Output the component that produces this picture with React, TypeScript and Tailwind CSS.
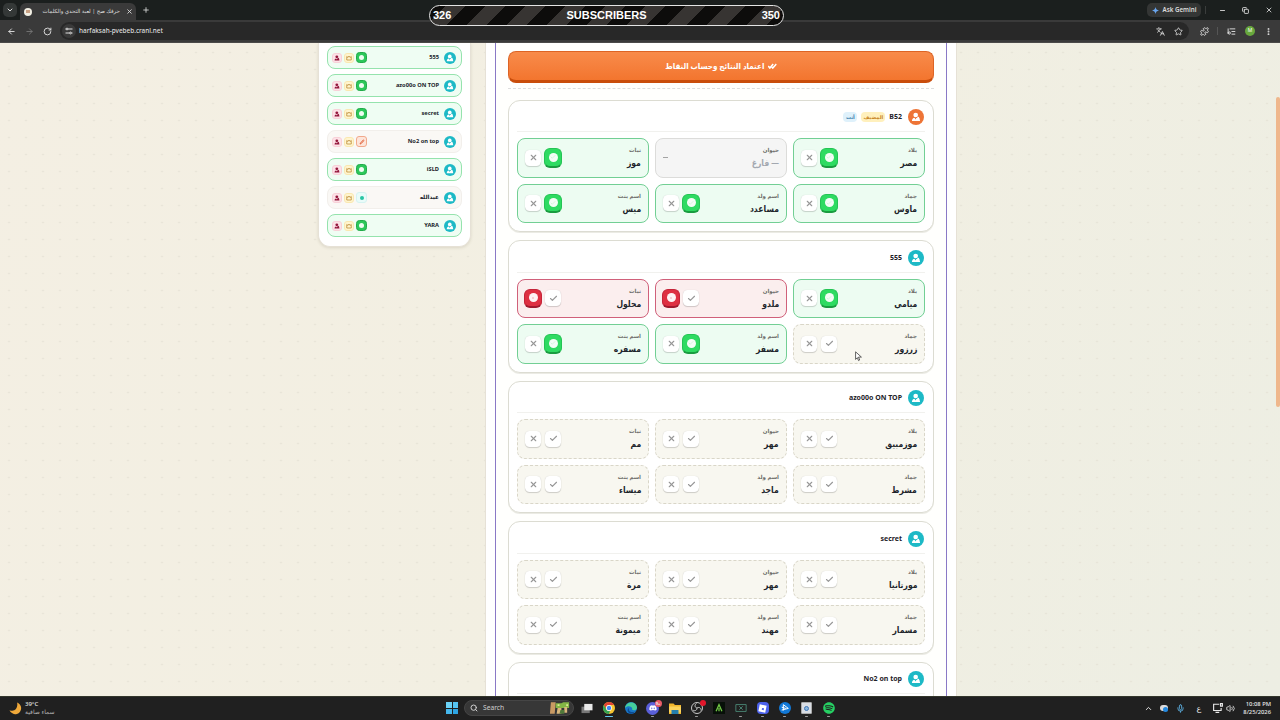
import type { ReactNode } from "react";
import {
  ArrowLeft,
  ArrowRight,
  Check,
  ChevronDown,
  ChevronUp,
  Copy,
  Languages,
  ListMusic,
  Mic,
  Minus,
  MoreVertical,
  Plus,
  Puzzle,
  RotateCw,
  Search,
  Star,
  Volume2,
  X,
} from "lucide-react";
import { FaDiscord, FaSpotify } from "react-icons/fa";

type Status = "idle" | "ok" | "bad" | "empty";

interface Answer {
  label: string;
  value: string;
  status: Status;
}

interface Player {
  name: string;
  host?: boolean;
  answers: Answer[];
}

const LABELS = ["بلاد", "حيوان", "نبات", "جماد", "اسم ولد", "اسم بنت"];

function answers(values: string[], statuses?: Status[]): Answer[] {
  return values.map((value, i) => ({
    label: LABELS[i],
    value,
    status: statuses ? statuses[i] : "idle",
  }));
}

const PLAYERS: Player[] = [
  {
    name: "B52",
    host: true,
    answers: answers(
      ["مصر", "— فارغ", "موز", "ماوس", "مساعدد", "ميس"],
      ["ok", "empty", "ok", "ok", "ok", "ok"]
    ),
  },
  {
    name: "555",
    answers: answers(
      ["ميامي", "ملدو", "محلول", "زرزور", "مسفر", "مسفره"],
      ["ok", "bad", "bad", "idle", "ok", "ok"]
    ),
  },
  { name: "azo00o ON TOP", answers: answers(["موزمبيق", "مهر", "مم", "مشرط", "ماجد", "ميساء"]) },
  { name: "secret", answers: answers(["مورتانيا", "مهر", "مرة", "مسمار", "مهند", "ميمونة"]) },
  { name: "No2 on top", answers: [] },
];

const SIDEBAR = [
  { name: "555", state: "done" },
  { name: "azo00o ON TOP", state: "done" },
  { name: "secret", state: "done" },
  { name: "No2 on top", state: "writing" },
  { name: "iSLD", state: "done" },
  { name: "عبدالله", state: "online" },
  { name: "YARA", state: "done" },
];

const CELL_STYLES: Record<Status, string> = {
  ok: "border-[#72cf94] bg-[#edfcf2]",
  bad: "border-[#d0607a] bg-[#fbeeee]",
  empty: "border-[#dcdcda] bg-[#f5f5f5]",
  idle: "border-dashed border-[#d9d6c8] bg-[#f8f7f0]",
};

function UserIcon({ className }: { className?: string }) {
  return (
    <svg viewBox="0 0 16 16" className={className} fill="currentColor">
      <circle cx="7.500" cy="4.800" r="3.700" />
      <path d="M1.500 14.500c0-3.200 1.800-4.800 4-5.300L7.500 12l1-2.500h5l1 5z" />
      <circle cx="11.500" cy="9" r="1.600" />
    </svg>
  );
}

function Avatar({ host }: { host?: boolean }) {
  return (
    <div
      className={`flex size-4 shrink-0 items-center justify-center rounded-full text-white ${
        host ? "bg-[#ee7436]" : "bg-[#1db9c6]"
      }`}
    >
      <UserIcon className="size-2.5" />
    </div>
  );
}

function MarkButton({ kind, active }: { kind: "ok" | "bad"; active: boolean }) {
  if (active) {
    const color =
      kind === "ok"
        ? "bg-[#2edb62] border-[#24c454] border-b-[#1a9c40] text-[#c9f3d5]"
        : "bg-[#de3042] border-[#c52439] border-b-[#a01a2e] text-[#f5c4c9]";
    return (
      <div className={`-mx-px flex h-[19.5px] w-[18px] items-center justify-center rounded-md border border-b-2 ${color}`}>
        <div className="flex size-[9px] items-center justify-center rounded-full bg-white/95">
          {kind === "ok" ? (
            <Check className="size-1.5" strokeWidth={3} />
          ) : (
            <div className="size-0.5 rounded-full bg-current" />
          )}
        </div>
      </div>
    );
  }
  return (
    <div className="flex size-4 items-center justify-center rounded-[4.5px] bg-white text-[#979797] shadow-[0_1px_1px_rgba(0,0,0,0.16),0_0_1px_rgba(0,0,0,0.16)]">
      {kind === "ok" ? (
        <Check className="size-[9px]" strokeWidth={3} />
      ) : (
        <X className="size-[9px]" strokeWidth={3} />
      )}
    </div>
  );
}

function AnswerCell({ label, value, status }: Answer) {
  return (
    <div className={`flex h-[39.5px] items-center justify-between rounded-lg border px-[7px] ${CELL_STYLES[status]}`}>
      <div className="flex flex-col pt-px">
        <span className="h-[10px] text-[5.5px] leading-[8px] font-semibold text-[#6d6d69]">{label}</span>
        <span
          className={`h-[14px] origin-right scale-x-[0.88] text-[8.7px] leading-[14px] font-bold whitespace-nowrap ${
            status === "empty" ? "text-[#a3a8b0]" : "text-[#20242b]"
          }`}
        >
          {value}
        </span>
      </div>
      {status === "empty" ? (
        <div className="h-px w-[5px] bg-[#a3a3a3]" />
      ) : (
        <div className="flex items-center gap-1">
          <MarkButton kind="ok" active={status === "ok"} />
          <MarkButton kind="bad" active={status === "bad"} />
        </div>
      )}
    </div>
  );
}

function PlayerCard({ name, host, answers }: Player) {
  return (
    <div className="h-[132.5px] shrink-0 rounded-xl border border-[#dcdcd2] bg-white px-2 shadow-[0_1px_0_#ebebe4]">
      <div className="mb-1.5 flex h-[31.5px] items-center gap-1.5 border-b border-[#f1f1ee] pt-[3px] pr-px">
        <Avatar host={host} />
        <span className="text-[7px] font-bold text-[#1e2228]">{name}</span>
        {host && (
          <>
            <span className="-mr-0.5 flex h-2.5 w-6 items-center justify-center rounded-sm bg-[#fff0bd] text-[5px] font-bold text-[#c98626]">
              المضيف
            </span>
            <span className="-mr-0.5 flex h-2.5 w-3.5 items-center justify-center rounded-sm bg-[#dff1fb] text-[5px] font-bold text-[#367cab]">
              أنت
            </span>
          </>
        )}
      </div>
      <div className="grid grid-cols-3 gap-1.5">
        {answers.map((answer) => (
          <AnswerCell key={answer.label} {...answer} />
        ))}
      </div>
    </div>
  );
}

function StateBadge({ state }: { state: string }) {
  if (state === "done") {
    return (
      <div className="flex size-[11px] items-center justify-center rounded-[3.5px] border border-[#22ab4a] bg-[#2cc75a]">
        <div className="size-[5px] rounded-full bg-[#effcf2]" />
      </div>
    );
  }
  if (state === "writing") {
    return (
      <div className="flex size-[11px] items-center justify-center rounded-[3px] border border-[#f1a98c] bg-[#fde5da] text-[#e26a45]">
        <svg viewBox="0 0 12 12" className="size-1.5" fill="none" stroke="currentColor" strokeWidth="2">
          <path d="M2 10l2-.5L10 3 8.700 1.800 3 8z" />
        </svg>
      </div>
    );
  }
  return (
    <div className="flex size-[11px] items-center justify-center rounded-[3px] border border-[#d5f3f1] bg-[#e9fbf9]">
      <div className="size-1 rounded-full bg-[#27c5a3]" />
    </div>
  );
}

function Sidebar() {
  return (
    <aside className="flex h-[203.5px] w-[153px] shrink-0 flex-col gap-[5px] rounded-b-xl border border-t-0 border-[#e6e1d6] bg-white px-2 pt-[3px] shadow-[0_1px_3px_rgba(90,80,50,0.15)]">
      {SIDEBAR.map(({ name, state }) => (
        <div
          key={name}
          className={`flex h-[23px] shrink-0 items-center rounded-lg border pr-[5px] pl-1 ${
            state === "done" ? "border-[#95e3ad] bg-[#effdf3]" : "border-[#f2efeb] bg-[#faf8f5]"
          }`}
        >
          <div className="flex size-3 items-center justify-center rounded-full bg-[#1db9c6] text-white">
            <UserIcon className="size-2" />
          </div>
          <span className="mr-[5px] text-[5.7px] font-bold text-[#20242b]">{name}</span>
          <div className="mr-auto flex items-center gap-0.5">
            <StateBadge state={state} />
            <div className="flex size-2.5 items-center justify-center rounded-[3px] border border-[#fae8b0] bg-[#fff5cf] text-[#b8862f]">
              <svg viewBox="0 0 12 12" className="size-1.5" fill="none" stroke="currentColor" strokeWidth="1.500">
                <path d="M1.500 3l2.500 2 2-3 2 3 2.500-2v7h-9z" />
              </svg>
            </div>
            <div className="flex size-2.5 items-center justify-center rounded-[3px] border border-[#f8d0d8] bg-[#fde2e7] text-[#94183d]">
              <UserIcon className="size-1.5" />
            </div>
          </div>
        </div>
      ))}
    </aside>
  );
}

function BrowserChrome() {
  return (
    <header className="flex h-[43px] shrink-0 flex-col border-b border-[#4b4a49] bg-[#3a3a3a] text-[#dedede]">
      <div className="flex h-5 items-center bg-[#1b1f1e]">
        <div className="ml-[3px] flex size-3.5 items-center justify-center rounded-[5px] bg-[#343837]">
          <ChevronDown className="size-2" strokeWidth={3} />
        </div>
        <div className="mt-[3px] ml-[3px] flex h-[17px] w-[116px] items-center rounded-t-md bg-[#3a3a3a] pl-1">
          <div className="flex size-2 shrink-0 items-center justify-center rounded-full bg-[#f2efe4]">
            <div className="h-[3px] w-1 bg-[#c9a184]" />
          </div>
          <div dir="rtl" className="mr-1.5 ml-[5px] w-[83px] shrink-0 pb-px text-[5.5px] leading-3 whitespace-nowrap">
            حرفك صح | لعبة التحدي والكلمات
          </div>
          <X className="size-[7px] shrink-0" strokeWidth={3} />
        </div>
        <Plus className="ml-1.5 size-2" strokeWidth={2.5} />
        <div className="ml-auto flex h-3.5 w-[54px] items-center justify-center gap-1 rounded-[5px] bg-[#343635] text-[6.2px] font-semibold whitespace-nowrap">
          <svg viewBox="0 0 16 16" className="size-[7px]">
            <path d="M8 0q1 7 8 8-7 1-8 8-1-7-8-8 7-1 8-8" fill="#69a6ef" />
          </svg>
          Ask Gemini
        </div>
        <div className="ml-1 h-2 w-px bg-[#3a3d3c]" />
        <Minus className="ml-[13px] size-[7px]" strokeWidth={3} />
        <Copy className="ml-4 size-[7px] -scale-x-100 -rotate-90" strokeWidth={3} />
        <X className="mr-[7px] ml-4 size-2" strokeWidth={2.5} />
      </div>
      <div className="flex h-[22px] items-center">
        <ArrowLeft className="ml-[7px] size-[9px]" strokeWidth={2.5} />
        <ArrowRight className="ml-[9px] size-[9px] text-[#747474]" strokeWidth={2.5} />
        <RotateCw className="ml-[9px] size-[9px]" strokeWidth={2.5} />
        <div className="ml-2 flex h-[18px] flex-1 items-center rounded-full bg-[#282828] px-0.5">
          <div className="flex size-3.5 items-center justify-center rounded-full bg-[#3a3a3a]">
            <svg viewBox="0 0 16 16" className="size-2" fill="none" stroke="currentColor" strokeWidth="2">
              <path d="M1 4h1M6 4h9M1 12h8M13 12h2" />
              <circle cx="4" cy="4" r="1.800" />
              <circle cx="11" cy="12" r="1.800" />
            </svg>
          </div>
          <span className="ml-[3px] text-[6.4px] font-medium">harfaksah-pvebeb.cranl.net</span>
          <Languages className="ml-auto size-[9px]" strokeWidth={2.2} />
          <Star className="mr-[4px] ml-[9px] size-[9px]" strokeWidth={2.2} />
        </div>
        <Puzzle className="ml-[11px] size-[9px]" strokeWidth={2.5} />
        <div className="ml-2 h-2 w-px bg-[#555]" />
        <ListMusic className="ml-[9px] size-[9px] -scale-x-100" strokeWidth={2.5} />
        <div className="ml-[9px] flex size-2.5 items-center justify-center rounded-full bg-[#68a83d] text-[5px] text-white">M</div>
        <MoreVertical className="mr-[7px] ml-[9px] size-[9px]" strokeWidth={3} />
      </div>
    </header>
  );
}

function SubscriberBar() {
  return (
    <div className="absolute top-[5px] left-[429px] flex h-[21px] w-[355px] items-center justify-between rounded-full border border-[#e4e4e4] bg-[repeating-linear-gradient(135deg,#0d0c0b_0_10.7px,#373432_10.7px_24.8px,#0d0c0b_24.8px_28.3px)] px-[3px] font-['Liberation_Sans'] text-[11px] font-bold text-white">
      <span>326</span>
      <span>SUBSCRIBERS</span>
      <span>350</span>
    </div>
  );
}

function TaskIcon({ children, active, running }: { children: ReactNode; active?: boolean; running?: boolean }) {
  return (
    <div className="relative flex h-[22px] w-[22px] items-center justify-center">
      {children}
      {active && <div className="absolute bottom-0.5 h-px w-2 rounded bg-[#62c6ef]" />}
      {running && <div className="absolute bottom-0.5 h-px w-[3px] rounded bg-[#9b9b9b]" />}
    </div>
  );
}

function Taskbar() {
  return (
    <footer className="flex h-6 shrink-0 items-center border-t border-[#33362b] bg-[#202020] pb-px text-[#e8e8e8]">
      <svg viewBox="0 0 24 24" className="ml-[9px] size-[13px]">
        <path d="M15 1a11 11 0 1 1-14 14C10 19 17 12 15 1" fill="#f0a93a" />
      </svg>
      <div className="ml-[3px] w-[404px] text-[6px] leading-[8px] font-medium">
        <div>39°C</div>
        <div className="text-[#b5b5b5]">سماء صافية</div>
      </div>
      <div className="ml-[17px] grid size-3 grid-cols-2 gap-px">
        <i className="bg-[#6bd3f7]" />
        <i className="bg-[#55c5f3]" />
        <i className="bg-[#45b7ec]" />
        <i className="bg-[#2ea5e4]" />
      </div>
      <div className="ml-[6px] flex h-4 w-[110px] items-center rounded-full border border-[#454545] bg-[#373737] pl-[5px] text-[6.7px] text-[#d0d0d0]">
        <Search className="mr-[5px] size-2" strokeWidth={3} />
        Search
        <svg viewBox="0 0 24 14" className="mr-0.5 ml-auto h-3.5 w-[23px]">
          <path d="M3 1h5l-1 12H2z" fill="#c99a63" />
          <path d="M8 2h6l2-1h6v6H8z" fill="#83b545" />
          <path d="M10 7h4v6H9zM17 6h3v6h-3z" fill="#d9b77c" />
          <path d="M13 9h4v4h-5z" fill="#50793a" />
          <path d="M10 3h2v2h-2zM19 3h2v2h-2z" fill="#daeb91" />
        </svg>
      </div>
      <div className="ml-[1.5px] flex">
        <TaskIcon>
          <svg viewBox="0 0 14 12" className="h-[11px] w-3.5">
            <path d="M1 4h9v7H1z" fill="#777" />
            <path d="M4 1h9v7H4z" fill="#e9e9e9" />
          </svg>
        </TaskIcon>
        <TaskIcon active>
          <svg viewBox="0 0 24 24" className="size-3">
            <circle cx="12" cy="12" r="12" fill="#f4c430" />
            <path d="M1.600 6A12 12 0 0 1 22.400 6H12a6 6 0 0 0-5.200 9z" fill="#e24334" />
            <path d="M1.600 6L6.800 15A6 6 0 0 0 14 17.700L12 24A12 12 0 0 1 1.600 6" fill="#35a454" />
            <circle cx="12" cy="12" r="5.800" fill="white" />
            <circle cx="12" cy="12" r="4.400" fill="#4285f4" />
          </svg>
        </TaskIcon>
        <TaskIcon>
          <svg viewBox="0 0 24 24" className="size-3">
            <circle cx="12" cy="12" r="12" fill="#1977c9" />
            <path d="M0 12C1-1 22-4 24 11c0 6-8 7-10 4 3-6-9-10-14-3" fill="#45cf9c" />
            <path d="M8 12c-2 7 5 10 12 7-3 4-8 5-10 4-6-3-6-9-2-11" fill="#0c4b92" />
          </svg>
        </TaskIcon>
        <TaskIcon running>
          <div className="flex size-[13px] items-center justify-center rounded-full bg-[#5a5fd9] text-white">
            <FaDiscord className="size-2" />
          </div>
          <div className="absolute top-[3px] right-[2px] size-[7px] rounded-full bg-[#ea5a67] text-center text-[4px] leading-[7px] font-bold">9+</div>
        </TaskIcon>
        <TaskIcon>
          <svg viewBox="0 0 24 22" className="h-[11px] w-3">
            <path d="M0 1h9l3 3h12v18H0z" fill="#f0b52d" />
            <path d="M0 7h24v12H0z" fill="#fbd35c" />
            <path d="M5 14h14v8H5z" fill="#247fae" />
          </svg>
        </TaskIcon>
        <TaskIcon running>
          <svg viewBox="0 0 24 24" className="size-3" fill="none" stroke="#c7c7c7" strokeWidth="2">
            <circle cx="12" cy="12" r="11" />
            <path d="M12 12c-5-1-5-7-1-9M12 12c5-3 9 1 8 5M12 12c0 5-5 7-8 4" />
          </svg>
          <div className="absolute top-[3px] right-0.5 size-1.5 rounded-full bg-[#e3162b]" />
        </TaskIcon>
        <TaskIcon>
          <div className="flex size-3 items-center justify-center bg-[#071008]">
            <svg viewBox="0 0 12 12" className="size-2.5" fill="none" stroke="#71c945" strokeWidth="1.500">
              <path d="M2.500 10L6 2l3.500 8M6 6v4" />
            </svg>
          </div>
        </TaskIcon>
        <TaskIcon running>
          <svg viewBox="0 0 14 10" className="h-2.5 w-3" fill="none" stroke="#4d8d7b">
            <path d="M1 1h12v8H1zM5 3l4 4M9 3L5 7" />
          </svg>
        </TaskIcon>
        <TaskIcon running>
          <div className="flex size-3 items-center justify-center rounded-sm bg-[#4c61ea]">
            <div className="flex size-[7px] rotate-12 items-center justify-center bg-white">
              <div className="size-0.5 bg-[#4c61ea]" />
            </div>
          </div>
        </TaskIcon>
        <TaskIcon running>
          <div className="flex size-3 items-center justify-center rounded-full bg-[#1178d7]">
            <svg viewBox="0 0 12 12" className="size-2.5" fill="none" stroke="white" strokeWidth="1.200">
              <path d="M4 9V2l6 4.500-8 2M2 5l5 1.500" />
            </svg>
          </div>
        </TaskIcon>
        <TaskIcon running>
          <div className="flex h-3 w-[11px] items-center justify-center rounded-[1px] border border-[#aaa] bg-[#d8dde4]">
            <div className="size-[5px] rounded-full border border-[#3f75b7] bg-[#8bb7dc]" />
          </div>
        </TaskIcon>
        <TaskIcon running>
          <FaSpotify className="size-3 text-[#26cf63]" />
        </TaskIcon>
      </div>
      <ChevronUp className="ml-auto size-[9px]" strokeWidth={2.5} />
      <div className="relative ml-[7px] h-[6px] w-2 rounded-full bg-[#dcdcdc]">
        <div className="absolute top-0.5 left-[3px] size-[5px] rounded-full bg-[#2388df]" />
      </div>
      <Mic className="ml-2 size-[9px] text-[#5aa9d8]" strokeWidth={2.5} />
      <span className="ml-3 text-[8px]">ع</span>
      <svg viewBox="0 0 16 16" className="ml-3 size-2.5" fill="none" stroke="currentColor" strokeWidth="1.800">
        <path d="M10 2H1v10h12V8M4 15h6M12 1h3v4h-3z" />
      </svg>
      <Volume2 className="ml-[3px] size-[9px]" strokeWidth={2.2} />
      <div className="mr-[9px] ml-[8px] text-right text-[5.8px] leading-[8px] font-medium">
        <div>10:08 PM</div>
        <div>8/25/2026</div>
      </div>
    </footer>
  );
}

export default function App() {
  return (
    <div className="relative flex h-[720px] w-[1280px] flex-col overflow-hidden font-['Noto_Sans','DejaVu_Sans',sans-serif]">
      <BrowserChrome />
      <SubscriberBar />
      <main className="flex min-h-0 flex-1 bg-[radial-gradient(circle,#e2dfd2_0.7px,transparent_1.1px),linear-gradient(115deg,#f4efe3_0%,#f2efe2_50%,#edeee3_100%)] [background-size:17px_17px,100%_100%] [background-position:0.5px_1px,0_0]">
        <div dir="rtl" className="mr-auto ml-[318px] flex items-start gap-3.5">
          <section className="h-full w-[472px] border-x border-[#e6e1d6] bg-white px-[9px]">
            <div className="flex h-[653px] flex-col gap-2 overflow-hidden border-x border-[#8a79c6] bg-[#fffffd] px-[12px] pt-2">
              <button className="flex h-8 shrink-0 items-center justify-center rounded-lg border border-b-[3px] border-[#dd6425] border-b-[#c94d0b] bg-linear-to-b from-[#f88b4a] to-[#f3752e] text-[8px] font-bold text-white">
                <span className="flex scale-x-[0.9] items-center gap-1 pb-px">
                  <svg viewBox="0 0 20 12" className="h-1.5 w-2.5" fill="none" stroke="currentColor" strokeWidth="3.500">
                    <path d="M1 6l3.500 4L12 2M9 8l2 2 8-8" />
                  </svg>
                  اعتماد النتائج وحساب النقاط
                </span>
              </button>
              <div className="-mt-[7px] h-[7.5px] shrink-0 pt-[4px]">
                <div className="border-t border-dashed border-[#dedede]" />
              </div>
              {PLAYERS.map((player) => (
                <PlayerCard key={player.name} {...player} />
              ))}
            </div>
          </section>
          <Sidebar />
        </div>
        <div className="w-1 pt-[54px]">
          <div className="h-[310px] rounded-full bg-[#efb78c]" />
        </div>
      </main>
      <Taskbar />
      <svg viewBox="0 0 12 18" className="absolute top-[351px] left-[855px] h-[11px] w-[7px]">
        <path d="M1 1v13l3-3 2 5 2-1-2-5h5z" fill="white" stroke="#333" strokeWidth="1.300" />
      </svg>
    </div>
  );
}
